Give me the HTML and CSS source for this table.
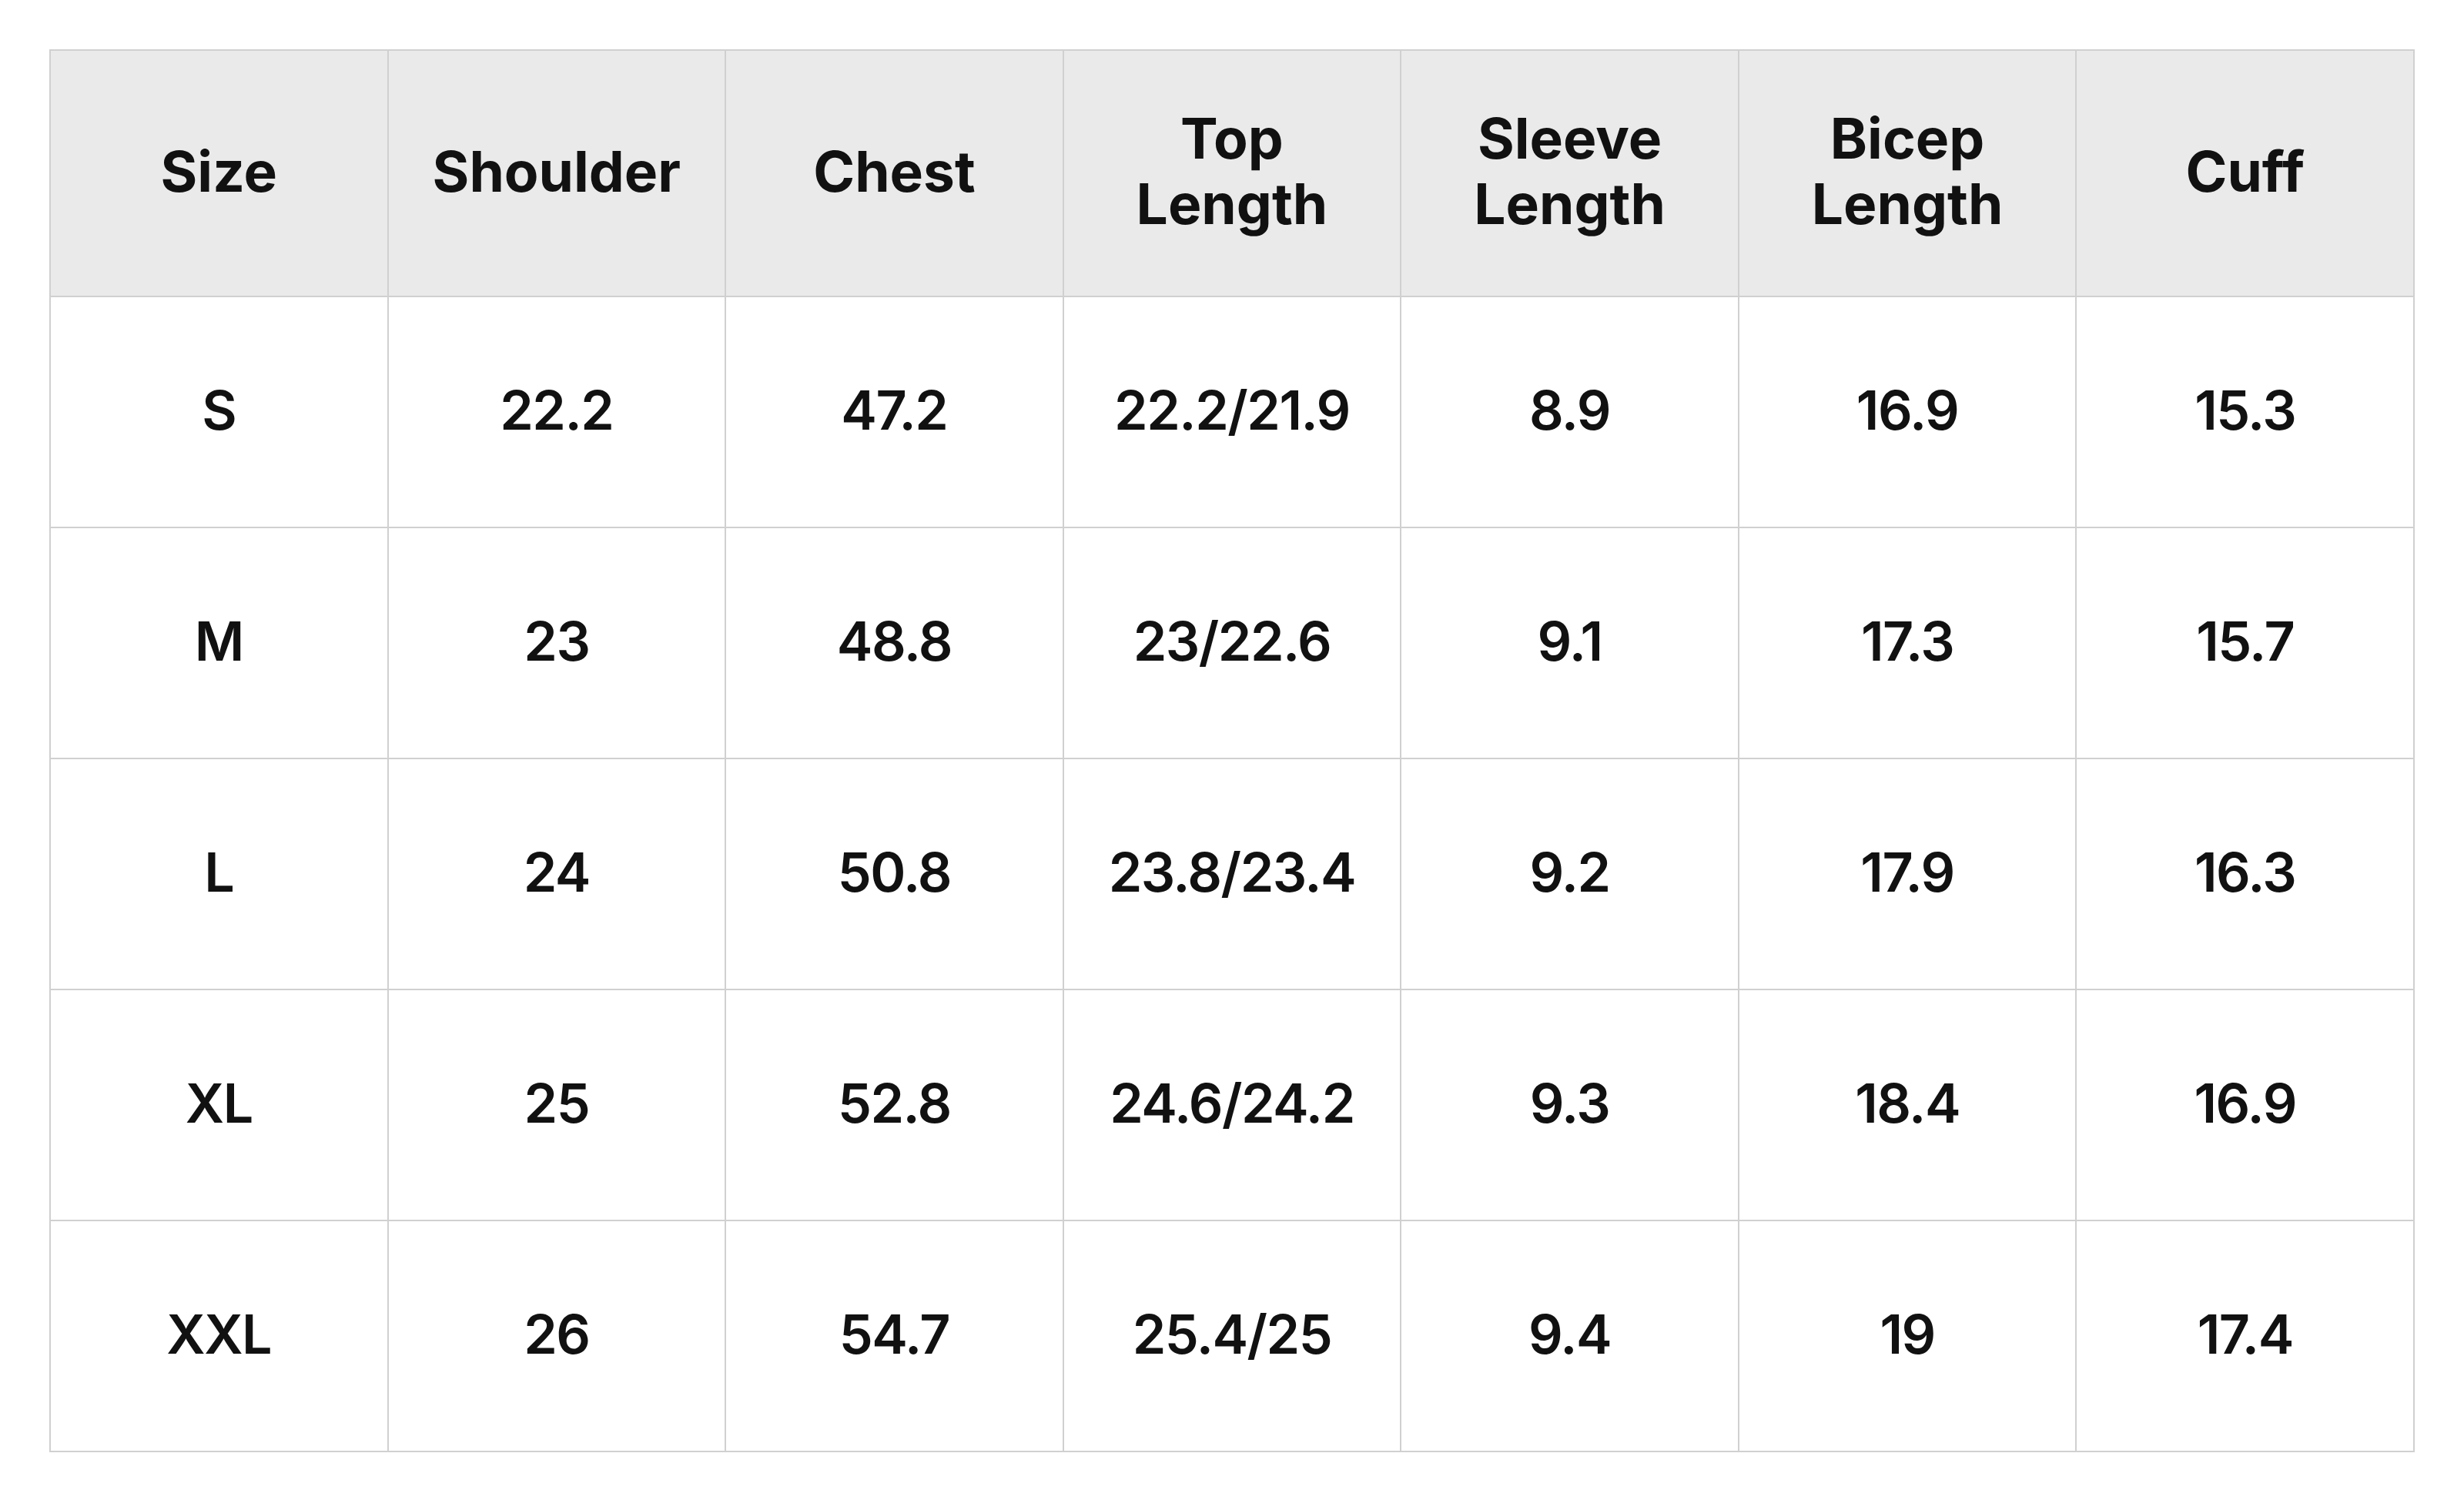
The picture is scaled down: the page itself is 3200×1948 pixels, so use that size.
FILE: index.html
```html
<!DOCTYPE html>
<html lang="en">
<head>
<meta charset="utf-8">
<title>Size Chart</title>
<link rel="stylesheet" href="styles.css">
</head>
<body>
<div class="wrap">
<table class="size-table">
  <thead>
    <tr>
      <th>Size</th>
      <th>Shoulder</th>
      <th>Chest</th>
      <th>Top<br>Length</th>
      <th>Sleeve<br>Length</th>
      <th>Bicep<br>Length</th>
      <th>Cuff</th>
    </tr>
  </thead>
  <tbody>
    <tr><td>S</td><td>22.2</td><td>47.2</td><td>22.2/21.9</td><td>8.9</td><td>16.9</td><td>15.3</td></tr>
    <tr><td>M</td><td>23</td><td>48.8</td><td>23/22.6</td><td>9.1</td><td>17.3</td><td>15.7</td></tr>
    <tr><td>L</td><td>24</td><td>50.8</td><td>23.8/23.4</td><td>9.2</td><td>17.9</td><td>16.3</td></tr>
    <tr><td>XL</td><td>25</td><td>52.8</td><td>24.6/24.2</td><td>9.3</td><td>18.4</td><td>16.9</td></tr>
    <tr><td>XXL</td><td>26</td><td>54.7</td><td>25.4/25</td><td>9.4</td><td>19</td><td>17.4</td></tr>
  </tbody>
</table>
</div>
</body>
</html>
```

FILE: styles.css
```css
html, body {
  margin: 0;
  padding: 0;
  background: #ffffff;
}

.wrap {
  padding: 64px;
}

.size-table {
  width: 3072px;
  table-layout: fixed;
  border-collapse: collapse;
  font-family: Inter, "Noto Sans", sans-serif;
  color: #111111;
  text-align: center;
}

.size-table th,
.size-table td {
  border: 2px solid #d0d0d0;
  padding: 0;
  vertical-align: middle;
  text-align: center;
}

.size-table th {
  height: 312px;
  padding-bottom: 6px;
  background: #eaeaea;
  font-size: 73px;
  font-weight: 700;
  line-height: 85px;
}

.size-table td {
  height: 292px;
  padding-bottom: 6px;
  font-size: 70px;
  font-weight: 600;
  line-height: 85px;
  letter-spacing: -1.5px;
}
```
